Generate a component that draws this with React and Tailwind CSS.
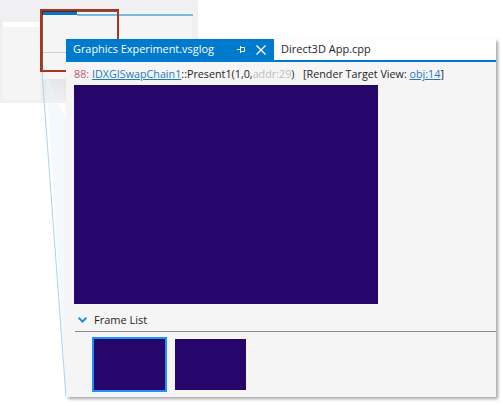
const uiFont = { fontFamily: '"Open Sans", "Noto Sans", sans-serif' };

function PinIcon() {
  return (
    <svg viewBox="0 0 8 7" className="h-[7px] w-[8px]" fill="none" stroke="white" strokeWidth="1">
      <path d="M0 3.500h3M3.500 0v7M3.500 1.500h4v4h-4" />
    </svg>
  );
}

function CloseIcon() {
  return (
    <svg viewBox="0 0 10 10" className="h-[10px] w-[10px]" fill="none" stroke="white" strokeWidth="1.300">
      <path d="M0.500 0.500l9 9M9.500 0.500l-9 9" />
    </svg>
  );
}

function Backdrop() {
  return (
    <div className="absolute left-0 top-0 h-[103px] w-[198px] bg-[#f0f0f2]">
      {/* small window behind the callout */}
      <div className="absolute left-[3px] top-[22px] h-[78px] w-[37px] bg-[#f5f5f5]">
        <div className="h-[5px] bg-white" />
      </div>
      <div className="absolute left-[42px] top-[11px] h-[68px] w-[150px] bg-[#f5f5f5]">
        <div className="h-[4px] w-[35px] bg-[#0a72c8]" />
      </div>
      <div className="absolute left-[77px] top-[14px] h-[2px] w-[116px] bg-[#7db7e6]" />
      <div className="absolute left-[42px] top-[52px] h-px w-[150px] bg-[#cfcfcf]" />
      <div className="absolute left-[42px] top-[79px] h-[21px] w-[150px] bg-gradient-to-b from-[#e6e6e8] to-[#efeff1]" />
      <div className="absolute left-[40px] top-[9px] h-[63px] w-[79px] border-2 border-[#a8361c] shadow-[inset_1px_1px_0_rgba(60,20,10,0.7)]" />
    </div>
  );
}

export default function App() {
  return (
    <div className="relative h-[406px] w-[503px] overflow-hidden bg-white" style={uiFont}>
      <Backdrop />
      {/* callout lines from the red box to the panel */}
      <svg className="absolute left-0 top-0" width="503" height="406" fill="none">
        <path d="M46 72 L66 397 L66 120 Z" fill="#e9f4fb" opacity="0.5" />
        <path d="M42 72 L66 397" stroke="#a9d3ef" strokeWidth="1" />
      </svg>

      <div className="absolute left-[66px] top-[39px] flex h-[358px] w-[430px] flex-col bg-[#f5f5f5] shadow-[2px_2px_3px_rgba(0,0,0,0.35)]">
        <div className="flex h-[23px] shrink-0 border-b-2 border-[#007acc]">
          <div className="flex h-[21px] w-[208px] items-center bg-[#007acc] pl-[7px] text-[10.900px] text-white">
            <span className="flex-1">Graphics Experiment.vsglog</span>
            <span className="mr-[11px] flex"><PinIcon /></span>
            <span className="mr-[8px] flex"><CloseIcon /></span>
          </div>
          <div className="flex h-[21px] items-center bg-white pl-[7px] pr-[8px] text-[11px] text-[#1e1e1e]">
            Direct3D App.cpp
          </div>
          <div className="h-[21px] flex-1 bg-white" />
        </div>

        <div className="flex h-[23px] shrink-0 items-center whitespace-pre pl-[8px] pt-[2px] text-[10.750px] text-[#1e1e1e]">
          <span className="text-[#c8566e]">88: </span>
          <span className="text-[#1f78c4] underline">IDXGISwapChain1</span>
          <span>::Present1(1,0,</span>
          <span className="text-[#bdbdbd]">addr:29</span>
          <span>)</span>
          <span className="ml-[3px]">  [Render Target View: </span>
          <span className="text-[#1f78c4] underline">obj:14</span>
          <span>]</span>
        </div>

        <div className="ml-[8px] h-[219px] w-[304px] shrink-0 bg-[#26066b]" />

        <div className="mt-[5px] ml-[9px] flex h-[23px] shrink-0 items-center border-b border-[#8a8a8a] text-[11px] text-[#1e1e1e]">
          <svg viewBox="0 0 9 6" className="ml-[3px] mr-[7px] h-[6px] w-[9px]" fill="none" stroke="#1a8fe0" strokeWidth="2">
            <path d="M0.500 0.700L4.500 4.500L8.500 0.700" />
          </svg>
          Frame List
        </div>

        <div className="ml-[26px] mt-[5px] flex items-center gap-[8px]">
          <div className="h-[55px] w-[75px] border-2 border-[#1e90ff] bg-[#26066b]" />
          <div className="h-[51px] w-[71px] bg-[#26066b]" />
        </div>
      </div>
    </div>
  );
}
